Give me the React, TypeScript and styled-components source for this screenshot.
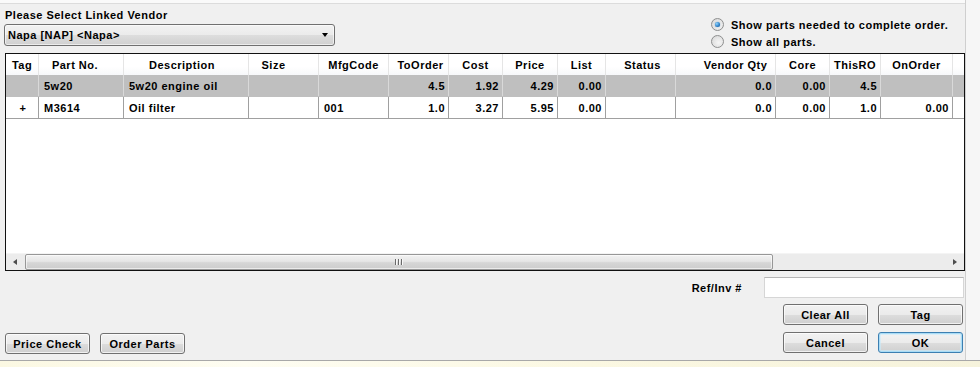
import React from 'react';
import styled, { createGlobalStyle } from 'styled-components';

const GlobalStyle = createGlobalStyle`
  html, body { margin: 0; padding: 0; }
  body {
    width: 980px; height: 367px; overflow: hidden;
    background: #fcf9e5;
    font-family: "Liberation Sans", Arial, sans-serif;
  }
`;

const COLS = '33px 85px 125px 70px 70px 60px 54px 55px 48px 70px 100px 54px 51px 72px 12px';

type Col = { title: string; align: 'left' | 'right' | 'center'; shift: number };
const columns: Col[] = [
  { title: 'Tag', align: 'center', shift: 0 },
  { title: 'Part No.', align: 'left', shift: -6 },
  { title: 'Description', align: 'left', shift: -4 },
  { title: 'Size', align: 'left', shift: -10 },
  { title: 'MfgCode', align: 'left', shift: 0 },
  { title: 'ToOrder', align: 'right', shift: 2 },
  { title: 'Cost', align: 'right', shift: 0 },
  { title: 'Price', align: 'right', shift: 0 },
  { title: 'List', align: 'right', shift: 0 },
  { title: 'Status', align: 'left', shift: 2 },
  { title: 'Vendor Qty', align: 'right', shift: 10 },
  { title: 'Core', align: 'right', shift: 0 },
  { title: 'ThisRO', align: 'right', shift: 0 },
  { title: 'OnOrder', align: 'right', shift: 0 },
  { title: '', align: 'left', shift: 0 },
];

const rows: { cells: string[]; selected: boolean }[] = [
  { cells: ['', '5w20', '5w20 engine oil', '', '', '4.5', '1.92', '4.29', '0.00', '', '0.0', '0.00', '4.5', '', ''], selected: true },
  { cells: ['+', 'M3614', 'Oil filter', '', '001', '1.0', '3.27', '5.95', '0.00', '', '0.0', '0.00', '1.0', '0.00', ''], selected: false },
];

const Window = styled.div`
  width: 980px;
  height: 367px;
  display: flex;
  flex-direction: column;
  background: linear-gradient(90deg, #fbf8e2 0%, #fefdf2 25%, #fbf8e2 60%, #f6f3dc 100%);
  letter-spacing: 0.5px;
`;

const Panel = styled.div`
  height: 361px;
  box-sizing: border-box;
  display: flex;
  background: #f4f4f4;
  border-bottom: 1px solid #a8a8a8;
`;

const Main = styled.div`
  width: 966px;
  box-sizing: border-box;
  border-right: 1px solid #cfcfcf;
  background: #f0f0f0;
  display: flex;
  flex-direction: column;
`;

const SideStrip = styled.div`
  flex: 1;
  background: #f6f6f6;
`;

const TopStrip = styled.div`
  height: 4px;
  box-sizing: border-box;
  background: #fafafa;
  border-bottom: 1px solid #dcdcdc;
`;

const TopRow = styled.div`
  height: 49px;
  display: flex;
  padding-left: 4px;
`;

const VendorBox = styled.div`
  width: 331px;
  display: flex;
  flex-direction: column;
`;

const Label = styled.div`
  margin-top: 4px;
  margin-left: 1px;
  height: 14px;
  line-height: 14px;
  font-size: 11px;
  font-weight: bold;
  color: #000;
  white-space: nowrap;
`;

const Select = styled.div`
  margin-top: 2px;
  height: 22px;
  box-sizing: border-box;
  border: 1px solid #707070;
  border-radius: 3px;
  background: linear-gradient(#f2f2f2 0%, #ebebeb 50%, #dddddd 51%, #d0d0d0 100%);
  box-shadow: inset 0 0 0 1px rgba(255, 255, 255, 0.6);
  display: flex;
  align-items: center;
  padding: 0 6px 0 3px;
  font-size: 11px;
  font-weight: bold;
  color: #000;
`;

const SelectText = styled.span`
  flex: 1;
`;

const DownArrow = styled.span`
  width: 0;
  height: 0;
  border-left: 3.5px solid transparent;
  border-right: 3.5px solid transparent;
  border-top: 4px solid #000;
`;

const RadioGroup = styled.div`
  margin-left: 376px;
  padding-top: 12px;
  display: flex;
  flex-direction: column;
`;

const RadioRow = styled.div`
  height: 17px;
  display: flex;
  align-items: center;
  gap: 7px;
  font-size: 11px;
  font-weight: bold;
  color: #000;
  white-space: nowrap;
`;

const RadioCircle = styled.span<{ $checked?: boolean }>`
  width: 13px;
  height: 13px;
  box-sizing: border-box;
  border-radius: 50%;
  border: 1px solid #8e8f8f;
  background: radial-gradient(circle at 60% 60%, #f6f6f6 0%, #e2e2e2 60%, #cfcfcf 100%);
  display: flex;
  align-items: center;
  justify-content: center;
  &::after {
    content: '';
    display: ${(p) => (p.$checked ? 'block' : 'none')};
    width: 5px;
    height: 5px;
    border-radius: 50%;
    background: radial-gradient(circle at 35% 35%, #8fd4ff 0%, #2a7dc4 60%, #0d4f8c 100%);
    box-shadow: 0 0 1px #1e5f9a;
  }
`;

const Grid = styled.div`
  margin-left: 5px;
  width: 960px;
  height: 218px;
  box-sizing: border-box;
  border: 1px solid #111;
  background: #fff;
  display: flex;
  flex-direction: column;
  overflow: hidden;
`;

const HeaderRow = styled.div`
  display: grid;
  grid-template-columns: ${COLS};
  height: 21px;
  background: linear-gradient(#ffffff 0%, #ffffff 60%, #f7f8fa 100%);
`;

const HeaderCell = styled.div<{ $shift: number }>`
  box-sizing: border-box;
  border-right: 1px solid #e5e5e5;
  display: flex;
  align-items: center;
  justify-content: center;
  padding-left: ${(p) => (p.$shift > 0 ? p.$shift * 2 : 0)}px;
  padding-right: ${(p) => (p.$shift < 0 ? -p.$shift * 2 : 0)}px;
  font-size: 11px;
  font-weight: bold;
  color: #000;
  white-space: nowrap;
  overflow: hidden;
`;

const DataRow = styled.div<{ $selected?: boolean }>`
  display: grid;
  grid-template-columns: ${COLS};
  height: 22px;
  box-sizing: border-box;
  background: ${(p) => (p.$selected ? '#bfbfbf' : '#ffffff')};
  border-bottom: 1px solid ${(p) => (p.$selected ? '#bfbfbf' : '#a0a0a0')};
`;

const Cell = styled.div<{ $align: string; $selected?: boolean }>`
  box-sizing: border-box;
  border-right: 1px solid ${(p) => (p.$selected ? '#d9d9d9' : '#a0a0a0')};
  display: flex;
  align-items: center;
  justify-content: ${(p) => (p.$align === 'right' ? 'flex-end' : p.$align === 'center' ? 'center' : 'flex-start')};
  padding: 0 3px 0 5px;
  font-size: 11px;
  font-weight: bold;
  color: #000;
  white-space: nowrap;
  overflow: hidden;
`;

const GridBody = styled.div`
  flex: 1;
`;

const HScroll = styled.div`
  height: 17px;
  display: flex;
  align-items: stretch;
  background: #ececec;
  border-top: 1px solid #f4f4f4;
  box-sizing: border-box;
`;

const ScrollBtn = styled.div`
  width: 18px;
  display: flex;
  align-items: center;
  justify-content: center;
`;

const ArrowLeft = styled.span`
  width: 0;
  height: 0;
  border-top: 3.5px solid transparent;
  border-bottom: 3.5px solid transparent;
  border-right: 4px solid #4d4d4d;
`;

const ArrowRight = styled.span`
  width: 0;
  height: 0;
  border-top: 3.5px solid transparent;
  border-bottom: 3.5px solid transparent;
  border-left: 4px solid #4d4d4d;
`;

const Track = styled.div`
  flex: 1;
  display: flex;
  padding: 0 1px;
`;

const Thumb = styled.div`
  width: 748px;
  box-sizing: border-box;
  border: 1px solid #979797;
  border-radius: 2px;
  background: linear-gradient(#f2f2f2 0%, #e6e6e6 45%, #d6d6d6 55%, #cdcdcd 100%);
  box-shadow: inset 0 0 0 1px rgba(255, 255, 255, 0.6);
  display: flex;
  align-items: center;
  justify-content: center;
`;

const Grip = styled.span`
  width: 9px;
  height: 6px;
  background: repeating-linear-gradient(90deg, #6a6a6a 0 1px, #f8f8f8 1px 2px, transparent 2px 3px);
`;

const Bottom = styled.div`
  flex: 1;
  display: flex;
  padding: 6px 1px 0 5px;
`;

const LeftButtons = styled.div`
  display: flex;
  gap: 10px;
  align-items: flex-start;
  padding-top: 56px;
`;

const RightColumn = styled.div`
  margin-left: auto;
  display: flex;
  flex-direction: column;
  gap: 7px;
`;

const RefRow = styled.div`
  display: flex;
  align-items: center;
  justify-content: flex-end;
  gap: 22px;
  height: 21px;
  margin-bottom: -1px;
`;

const RefLabel = styled.div`
  font-size: 11px;
  font-weight: bold;
  color: #000;
`;

const TextBox = styled.div`
  width: 200px;
  height: 21px;
  box-sizing: border-box;
  background: #fff;
  border: 1px solid #d6d6d6;
  border-top-color: #b5b5b5;
`;

const ButtonRow = styled.div`
  display: flex;
  justify-content: flex-end;
  gap: 10px;
  padding-right: 1px;
`;

const Button = styled.div<{ $focused?: boolean }>`
  width: 85px;
  height: 21px;
  box-sizing: border-box;
  border: 1px solid ${(p) => (p.$focused ? '#3c7fb1' : '#707070')};
  border-radius: 3px;
  background: linear-gradient(#f2f2f2 0%, #ebebeb 50%, #dddddd 51%, #cfcfcf 100%);
  box-shadow: ${(p) =>
    p.$focused
      ? 'inset 0 0 0 1px #a9dcf6, inset 0 0 0 2px rgba(200,235,252,0.6)'
      : 'inset 0 0 0 1px rgba(255,255,255,0.7)'};
  display: flex;
  align-items: center;
  justify-content: center;
  font-size: 11px;
  font-weight: bold;
  color: #000;
  white-space: nowrap;
`;

export default function App() {
  return (
    <>
      <GlobalStyle />
      <Window>
        <Panel>
          <Main>
            <TopStrip />
            <TopRow>
              <VendorBox>
                <Label>Please Select Linked Vendor</Label>
                <Select>
                  <SelectText>Napa [NAP] &lt;Napa&gt;</SelectText>
                  <DownArrow />
                </Select>
              </VendorBox>
              <RadioGroup>
                <RadioRow>
                  <RadioCircle $checked />
                  Show parts needed to complete order.
                </RadioRow>
                <RadioRow>
                  <RadioCircle />
                  Show all parts.
                </RadioRow>
              </RadioGroup>
            </TopRow>
            <Grid>
              <HeaderRow>
                {columns.map((c, i) => (
                  <HeaderCell key={i} $shift={c.shift}>
                    {c.title}
                  </HeaderCell>
                ))}
              </HeaderRow>
              {rows.map((r, ri) => (
                <DataRow key={ri} $selected={r.selected}>
                  {r.cells.map((v, ci) => (
                    <Cell key={ci} $align={columns[ci].align} $selected={r.selected}>
                      {v}
                    </Cell>
                  ))}
                </DataRow>
              ))}
              <GridBody />
              <HScroll>
                <ScrollBtn>
                  <ArrowLeft />
                </ScrollBtn>
                <Track>
                  <Thumb>
                    <Grip />
                  </Thumb>
                </Track>
                <ScrollBtn>
                  <ArrowRight />
                </ScrollBtn>
              </HScroll>
            </Grid>
            <Bottom>
              <LeftButtons>
                <Button>Price Check</Button>
                <Button>Order Parts</Button>
              </LeftButtons>
              <RightColumn>
                <RefRow>
                  <RefLabel>Ref/Inv #</RefLabel>
                  <TextBox />
                </RefRow>
                <ButtonRow>
                  <Button>Clear All</Button>
                  <Button>Tag</Button>
                </ButtonRow>
                <ButtonRow>
                  <Button>Cancel</Button>
                  <Button $focused>OK</Button>
                </ButtonRow>
              </RightColumn>
            </Bottom>
          </Main>
          <SideStrip />
        </Panel>
      </Window>
    </>
  );
}
